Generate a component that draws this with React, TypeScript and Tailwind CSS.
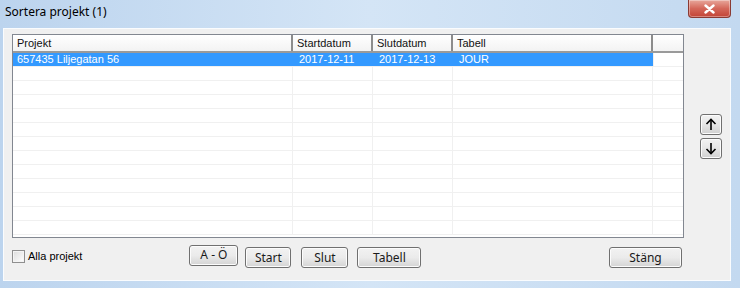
import React from 'react'

const COLS = [
  { label: 'Projekt', w: 'w-[280px]' },
  { label: 'Startdatum', w: 'w-[80px]' },
  { label: 'Slutdatum', w: 'w-[80px]' },
  { label: 'Tabell', w: 'w-[200px]' },
]

const ROW = ['657435 Liljegatan 56', '2017-12-11', '2017-12-13', 'JOUR']
const EMPTY_ROWS = 12

function WinButton({ label, w }: { label: string; w: string }) {
  return (
    <button
      className={`${w} h-[21px] rounded-[3px] border border-[#707070] bg-linear-to-b from-[#f2f2f2] via-[#ebebeb] to-[#d4d4d4] text-[12px] font-normal text-[#1a1a1a] leading-none shadow-[inset_0_0_0_1px_#fcfcfc]`}
      style={{ fontFamily: '"Noto Sans", "Open Sans", sans-serif' }}
    >
      {label}
    </button>
  )
}

function ArrowButton({ dir }: { dir: 'up' | 'down' }) {
  return (
    <button className="w-[22px] h-[21px] rounded-[3px] border border-[#707070] bg-linear-to-b from-[#f2f2f2] via-[#e6e6e6] to-[#d0d0d0] flex items-center justify-center shadow-[inset_0_0_0_1px_#fcfcfc]">
      <svg width="12" height="13" viewBox="0 0 12 13" fill="none" stroke="#000" strokeWidth="1.6">
        {dir === 'up' ? (
          <>
            <path d="M6 12V1.5" />
            <path d="M1.5 6L6 1.5L10.5 6" />
          </>
        ) : (
          <>
            <path d="M6 1V11.5" />
            <path d="M1.5 7L6 11.5L10.5 7" />
          </>
        )}
      </svg>
    </button>
  )
}

export default function App() {
  return (
    <div
      className="w-[740px] h-[288px] flex flex-col bg-linear-to-r from-[#bcd4ee] via-[#d4e5f6] to-[#c3d9f0] text-black overflow-hidden"
      style={{ fontFamily: 'Tahoma, "Liberation Sans", Arial, sans-serif' }}
    >
      {/* title bar */}
      <div className="h-[28px] flex items-start justify-between pl-[5px] pr-[9px]">
        <span className="mt-[3px] text-[12px] text-black" style={{ fontFamily: '"Noto Sans", "Open Sans", sans-serif' }}>
          Sortera projekt (1)
        </span>
        <div className="w-[43px] h-[18px] rounded-b-[4px] border border-t-0 border-[#8a3a33] bg-linear-to-b from-[#e7a79c] via-[#d4675a] to-[#c24335] flex items-center justify-center shadow-[inset_0_0_0_1px_rgba(255,255,255,0.35)]">
          <svg width="11" height="10" viewBox="0 0 11 10">
            <path d="M1.5 1.5L9.5 8.5M9.5 1.5L1.5 8.5" stroke="#fff" strokeWidth="2.4" strokeLinecap="round" />
          </svg>
        </div>
      </div>

      {/* client area */}
      <div className="ml-[3px] mr-[9px] h-[253px] bg-[#f0f0f0] border border-[#fafcfe] flex flex-col">
        <div className="flex pt-[5px]">
          {/* list view */}
          <div className="ml-[8px] w-[672px] h-[204px] border border-[#828790] bg-white overflow-hidden text-[#111]">
            <div className="flex h-[18px] bg-linear-to-b from-[#ffffff] to-[#f3f3f3] border-b-2 border-[#9a9a9a]">
              {COLS.map((c) => (
                <div key={c.label} className={`${c.w} border-r-2 border-[#8c8c8c] pl-[4px] text-[11px] leading-[17px]`}>
                  {c.label}
                </div>
              ))}
              <div className="flex-1" />
            </div>
            <div className="flex h-[14px] border-b border-[#f0f0f0]">
              {ROW.map((v, i) => (
                <div
                  key={i}
                  className={`${COLS[i].w} ${i > 0 ? 'pl-[6px]' : 'pl-[4px]'} bg-[#3399ff] text-white text-[11px] leading-[13px] border-r border-[#3399ff]`}
                >
                  {v}
                </div>
              ))}
              <div className="flex-1 border-l border-[#f0f0f0]" />
            </div>
            {Array.from({ length: EMPTY_ROWS }).map((_, r) => (
              <div key={r} className="flex h-[14px] border-b border-[#f0f0f0]">
                {COLS.map((c) => (
                  <div key={c.label} className={`${c.w} border-r border-[#f0f0f0]`} />
                ))}
                <div className="flex-1" />
              </div>
            ))}
          </div>

          {/* up / down */}
          <div className="ml-[16px] mt-[80px] flex flex-col gap-[3px]">
            <ArrowButton dir="up" />
            <ArrowButton dir="down" />
          </div>
        </div>

        {/* bottom bar */}
        <div className="flex items-center mt-[8px] h-[21px]">
          <label className="ml-[8px] flex items-center gap-[3px] text-[11px]">
            <span className="w-[13px] h-[13px] border border-[#8f8f8f] bg-linear-to-br from-[#dcdcdc] to-[#ffffff] shadow-[inset_0_0_0_1px_#f4f4f4]" />
            <span>Alla projekt</span>
          </label>
          <div className="ml-[107px] flex">
            <WinButton label="A - Ö" w="w-[49px]" />
            <div className="ml-[7px]">
              <WinButton label="Start" w="w-[46px]" />
            </div>
            <div className="ml-[10px]">
              <WinButton label="Slut" w="w-[47px]" />
            </div>
            <div className="ml-[9px]">
              <WinButton label="Tabell" w="w-[64px]" />
            </div>
          </div>
          <div className="ml-auto mr-[48px]">
            <WinButton label="Stäng" w="w-[73px]" />
          </div>
        </div>
      </div>
    </div>
  )
}
